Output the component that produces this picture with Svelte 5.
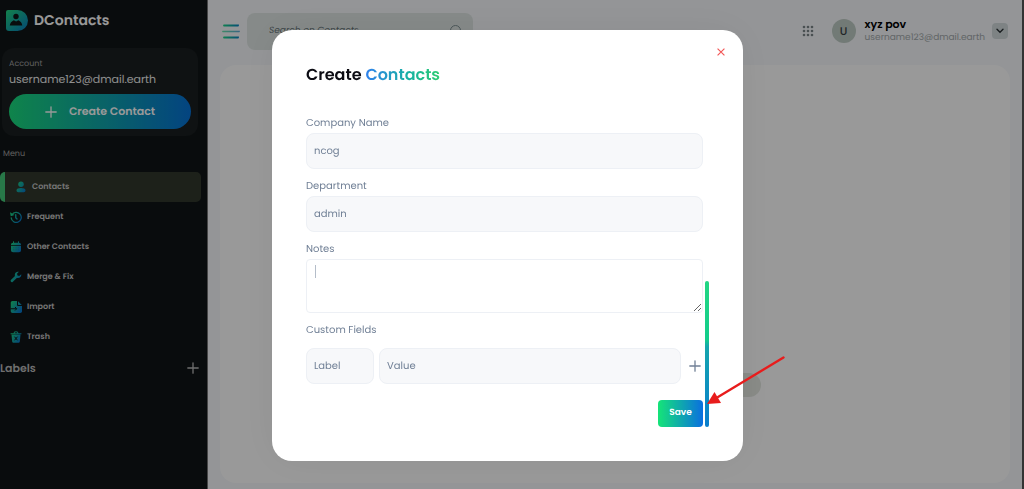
<script>
  let company = $state('ncog');
  let department = $state('admin');
  let notes = $state('');
  let customLabel = $state('');
  let customValue = $state('');
  let search = $state('');
  let active = $state('Contacts');

  const menu = ['Contacts', 'Frequent', 'Other Contacts', 'Merge & Fix', 'Import', 'Trash'];
</script>

{#snippet plus()}
  <svg class="plus" viewBox="0 0 12 12" aria-hidden="true">
    <path d="M6 .8v10.4M.8 6h10.4" stroke="currentColor" stroke-width="1.3" stroke-linecap="round" />
  </svg>
{/snippet}

{#snippet icon(name)}
  <svg class="icon" viewBox="0 0 24 24" fill="none" aria-hidden="true">
    {#if name === 'Contacts'}
      <circle cx="12" cy="6.500" r="5.500" fill="url(#brand)" />
      <path d="M3 18.500c0-3 3.900-4.500 9-4.500s9 1.500 9 4.500c0 2.500-1.500 4-3.500 4h-11C4.500 22.500 3 21 3 18.500z" fill="url(#brand)" />
    {:else if name === 'Frequent'}
      <path d="M4 7.500A10 10 0 1 1 2.500 14" stroke="url(#brand)" stroke-width="2.600" stroke-linecap="round" />
      <path d="M0 2.500l1.500 8 7.500-2.500z" fill="url(#brand)" />
      <path d="M11.500 7.500v6l2.500 2.500" stroke="url(#brand)" stroke-width="2.800" stroke-linecap="round" />
    {:else if name === 'Other Contacts'}
      <path d="M7 1.500v4M17 1.500v4" stroke="url(#brand)" stroke-width="2" stroke-linecap="round" />
      <path d="M2 8c0-3 1.500-4.500 4.500-4.500h11C20.500 3.500 22 5 22 8z" fill="url(#brand)" />
      <path d="M2 9.500h20V18c0 3-1.500 4.500-4.500 4.500h-11C3.500 22.500 2 21 2 18z" fill="url(#brand)" />
      <path d="M7.500 13.500h.1M12 13.500h.1M16.500 13.500h.1M7.500 17.500h.1M12 17.500h.1M16.500 17.500h.1" stroke="#108089" stroke-width="1.800" stroke-linecap="round" />
    {:else if name === 'Merge & Fix'}
      <path d="M22.500 6.500l-4 3.500-3.500-1-1-3.500 3.800-3.800C14 .6 9.800 3 9.600 7.500c0 1 .1 1.800.4 2.600L1.700 18c-1.700 1.700.9 5.800 3.600 4l8.300-8.200c4.700 1.500 9.900-2.300 8.900-7.300z" fill="url(#brand)" />
    {:else if name === 'Import'}
      <path d="M5 0h9v7.500C14 9 15 10 16.500 10H24v10.500c0 2-1.500 3.500-3.500 3.500H5c-2 0-3.500-1.500-3.500-3.500v-17C1.500 1.500 3 0 5 0z" fill="url(#brand)" />
      <path d="M16 .5L23.500 8H17c-.6 0-1-.4-1-1z" fill="url(#brand)" />
      <path d="M1 15.500h12M10 12l3.500 3.500L10 19" stroke="#101516" stroke-width="2" />
    {:else}
      <path d="M2 5.500h20M8 5c0-2.500 1.500-3.500 4-3.500S16 2.500 16 5" stroke="url(#brand)" stroke-width="2.200" stroke-linecap="round" />
      <path d="M3 7h18l-1.300 13.500c-.2 2-1.400 3-3.400 3H7.700c-2 0-3.200-1-3.400-3z" fill="url(#brand)" />
      <path d="M9.500 12l5 6M14.500 12l-5 6" stroke="#101516" stroke-width="2" stroke-linecap="round" />
    {/if}
  </svg>
{/snippet}

<svg class="defs" width="0" height="0" aria-hidden="true">
  <defs>
    <linearGradient id="brand" gradientUnits="userSpaceOnUse" x1="2" y1="6" x2="22" y2="18">
      <stop offset="0" stop-color="#1ad084" />
      <stop offset="1" stop-color="#0878cc" />
    </linearGradient>
  </defs>
</svg>

<div class="app">
  <aside class="sidebar">
    <div class="brand">
      <svg class="logo" viewBox="0 0 22 21" aria-hidden="true">
        <defs>
          <linearGradient id="logo" x1="0" y1="0" x2="1" y2="1">
            <stop offset="0" stop-color="#20d77d" />
            <stop offset="1" stop-color="#087ac4" />
          </linearGradient>
        </defs>
        <path d="M2 0h9.500a10.500 10.500 0 0 1 0 21H3a3 3 0 0 1-3-3V2a2 2 0 0 1 2-2z" fill="url(#logo)" />
        <circle cx="10" cy="6.500" r="2.700" fill="#101516" />
        <path d="M3.800 15.500c.3-2.500 1.800-4 4-5.200l2.300 1.300 2.300-1.300c2.200 1.200 3.600 2.700 3.900 5.200z" fill="#101516" />
      </svg>
      <span>DContacts</span>
    </div>

    <div class="account">
      <span class="caption">Account</span>
      <span class="address">username123@dmail.earth</span>
      <button class="create" type="button">{@render plus()} Create Contact</button>
    </div>

    <span class="caption menu-title">Menu</span>
    <nav>
      {#each menu as item}
        <button class="nav-item" class:active={active === item} type="button" onclick={() => (active = item)}>
          {@render icon(item)}
          {item}
        </button>
      {/each}
    </nav>

    <div class="labels">
      <span>Labels</span>
      <button type="button" aria-label="Add label">{@render plus()}</button>
    </div>
  </aside>

  <main class="main">
    <header class="topbar">
      <button class="hamburger" type="button" aria-label="Toggle menu">
        <svg viewBox="0 0 18 15" aria-hidden="true">
          <defs>
            <linearGradient id="bars" gradientUnits="userSpaceOnUse" x1="0" y1="0" x2="18" y2="0">
              <stop offset="0" stop-color="#1fdc82" />
              <stop offset="1" stop-color="#087cc9" />
            </linearGradient>
          </defs>
          <path d="M2 1.500h14v.01M2 13.500h14v.01" stroke="url(#bars)" stroke-width="1.800" stroke-linecap="round" />
          <path d="M.8 7.500h16.400v.01" stroke="url(#bars)" stroke-width="1.300" stroke-linecap="round" opacity=".65" />
        </svg>
      </button>
      <label class="search">
        <input type="text" placeholder="Search on Contacts" aria-label="Search on Contacts" bind:value={search} />
        <svg viewBox="0 0 14 14" fill="none" stroke="#7f9295" aria-hidden="true">
          <circle cx="6.500" cy="6.500" r="5" />
          <path d="M10.200 10.200L13 13" stroke-linecap="round" />
        </svg>
      </label>

      <div class="user">
        <button class="apps" type="button" aria-label="Apps">
          <svg viewBox="0 0 12 12" fill="#7c8589" aria-hidden="true">
            {#each [2, 6, 10] as cy}
              {#each [2, 6, 10] as cx}
                <circle {cx} {cy} r="1.300" />
              {/each}
            {/each}
          </svg>
        </button>
        <span class="avatar">U</span>
        <div class="who">
          <strong>xyz pov</strong>
          <span>username123@dmail.earth</span>
        </div>
        <button class="chevron" type="button" aria-label="Account menu">
          <svg viewBox="0 0 8 6" fill="none" aria-hidden="true">
            <path d="M1 1.200l3 3 3-3" stroke="#2c3236" stroke-width="1.400" stroke-linecap="round" />
          </svg>
        </button>
      </div>
    </header>

    <section class="panel">
      <div class="panel-pill"></div>
    </section>
  </main>
</div>

<div class="overlay">
  <div class="modal" role="dialog" aria-modal="true" aria-labelledby="modal-title">
    <button class="close" type="button" aria-label="Close">
      <svg viewBox="0 0 7 7" aria-hidden="true">
        <path d="M.5.5l6 6M6.500.5l-6 6" stroke="#f25555" />
      </svg>
    </button>
    <h2 id="modal-title">Create <span>Contacts</span></h2>

    <div class="scroll-area">
      <form onsubmit={(e) => e.preventDefault()}>
        <div class="field">
          <label for="company">Company Name</label>
          <input id="company" type="text" bind:value={company} />
        </div>
        <div class="field">
          <label for="department">Department</label>
          <input id="department" type="text" bind:value={department} />
        </div>
        <div class="field">
          <label for="notes">Notes</label>
          <textarea id="notes" bind:value={notes}></textarea>
        </div>
        <fieldset>
          <legend>Custom Fields</legend>
          <div class="custom-row">
            <input class="custom-label" type="text" placeholder="Label" aria-label="Label" bind:value={customLabel} />
            <input class="custom-value" type="text" placeholder="Value" aria-label="Value" bind:value={customValue} />
            <button type="button" aria-label="Add field">{@render plus()}</button>
          </div>
        </fieldset>
        <button class="save" type="submit">Save</button>
      </form>
      <div class="scrollbar"></div>
    </div>

    <svg class="arrow" viewBox="0 0 78 49" aria-hidden="true">
      <path d="M76.500 1.500L11 41" stroke="#e81c1c" stroke-width="2.400" stroke-linecap="round" />
      <path d="M0 48L7.500 36l6.500 11z" fill="#e81c1c" />
    </svg>
  </div>
</div>

<style>
  :global(body) {
    margin: 0;
    background: #f7f9fc;
  }

  :global(#app) {
    font-family: Poppins, Inter, sans-serif;
    font-size: 11px;
    text-rendering: geometricPrecision;
  }

  button,
  input,
  textarea {
    font: inherit;
    color: inherit;
    text-rendering: inherit;
    box-sizing: border-box;
  }

  button {
    padding: 0;
    border: none;
    background: none;
    cursor: pointer;
  }

  svg {
    display: block;
    flex: none;
  }

  .defs {
    position: absolute;
  }

  .plus {
    width: 12px;
    height: 12px;
  }

  .app {
    display: flex;
    min-height: 100vh;
    box-sizing: border-box;
    border-right: 2px solid #555;
  }

  .sidebar {
    width: 208px;
    flex: none;
    background: #101516;
    color: #fff;
    border-right: 1px solid #777;
    box-sizing: border-box;
  }

  .brand {
    display: flex;
    align-items: center;
    gap: 6px;
    height: 40px;
    padding-left: 6px;
    font-size: 14px;
    font-weight: 600;
  }

  .logo {
    width: 22px;
    height: 21px;
  }

  .account {
    display: flex;
    flex-direction: column;
    margin: 8px 9px 0 2px;
    padding: 10px 7px 7px;
    border-radius: 12px;
    background: #191e20;
  }

  .caption {
    font-size: 8px;
    line-height: 12px;
    color: #a0a0a0;
  }

  .address {
    line-height: 18px;
    font-size: 11px;
    color: #eee;
  }

  .create {
    display: flex;
    align-items: center;
    justify-content: center;
    gap: 12px;
    height: 35px;
    margin-top: 6px;
    border-radius: 18px;
    background: linear-gradient(90deg, #19dc7d, #0672d6);
    font-size: 11px;
    font-weight: 600;
  }

  .menu-title {
    display: block;
    padding: 12px 0 12px 3px;
  }

  nav {
    display: flex;
    flex-direction: column;
  }

  .nav-item {
    display: flex;
    align-items: center;
    gap: 5px;
    height: 30px;
    margin-right: 6px;
    padding-left: 10px;
    font-size: 8px;
    font-weight: 600;
    color: #c4c4c4;
  }

  .nav-item.active {
    border-left: 5px solid #43c878;
    border-radius: 5px;
    background: #31382c;
  }

  .icon {
    width: 12px;
    height: 12px;
  }

  .labels {
    display: flex;
    align-items: center;
    justify-content: space-between;
    height: 32px;
    padding-right: 8px;
    font-size: 11px;
    font-weight: 600;
    color: #b8b8b8;
  }

  .main {
    flex: 1;
    min-width: 0;
    display: flex;
    flex-direction: column;
    background: #f7f9fc;
  }

  .topbar {
    display: flex;
    align-items: center;
    height: 38px;
    padding: 12px 14px 15px;
  }

  .hamburger svg {
    width: 18px;
    height: 15px;
  }

  .search {
    display: flex;
    align-items: center;
    width: 226px;
    height: 37px;
    margin-left: 7px;
    padding: 0 10px 0 22px;
    box-sizing: border-box;
    border-radius: 8px;
    background: #dfe6e4;
  }

  .search input {
    flex: 1;
    min-width: 0;
    padding: 0;
    border: none;
    background: none;
    font-size: 9px;
    font-style: italic;
  }

  .search input::placeholder {
    color: #667477;
  }

  .search svg {
    width: 14px;
    height: 14px;
  }

  .user {
    display: flex;
    align-items: center;
    margin-left: auto;
  }

  .apps {
    margin-right: 18px;
  }

  .apps svg {
    width: 12px;
    height: 12px;
  }

  .avatar {
    width: 24px;
    height: 24px;
    margin-right: 9px;
    border-radius: 50%;
    background: #bfccc5;
    color: #383f43;
    font-weight: 500;
    line-height: 24px;
    text-align: center;
  }

  .who {
    display: flex;
    flex-direction: column;
    margin-right: 7px;
  }

  .who strong {
    line-height: 12px;
    font-weight: 600;
    color: #000;
  }

  .who span {
    padding-top: 2px;
    font-size: 9px;
    line-height: 12px;
    color: #a2a8ab;
  }

  .chevron {
    display: grid;
    place-items: center;
    width: 16px;
    height: 16px;
    border-radius: 4px;
    background: #d2dbdd;
  }

  .chevron svg {
    width: 8px;
    height: 6px;
  }

  .panel {
    flex: 1;
    display: flex;
    align-items: flex-end;
    justify-content: center;
    margin: 0 12px 6px;
    padding-bottom: 86px;
    border-radius: 16px;
    background: #fff;
  }

  .panel-pill {
    width: 292px;
    height: 24px;
    border-radius: 12px;
    background: #e4e8e1;
  }

  .overlay {
    position: fixed;
    inset: 0;
    display: flex;
    align-items: center;
    justify-content: center;
    padding: 2px 9px 0 0;
    background: rgba(0, 0, 0, 0.4);
  }

  .modal {
    position: relative;
    width: 471px;
    max-width: 90%;
    padding: 33px 34px 34px;
    box-sizing: border-box;
    border-radius: 20px;
    background: #fff;
    box-shadow: 0 0 40px rgba(0, 10, 30, 0.06);
    color: #718096;
  }

  .close {
    position: absolute;
    top: 18px;
    right: 18px;
  }

  .close svg {
    width: 8px;
    height: 8px;
  }

  h2 {
    margin: 0 0 28px;
    font-size: 16px;
    line-height: 24px;
    font-weight: 600;
    color: #0b0b12;
  }

  h2 span {
    background: linear-gradient(90deg, #2f80ed, #16b3a0 60%, #2ecc71);
    background-clip: text;
    color: transparent;
  }

  .scroll-area {
    display: flex;
    align-items: flex-end;
    gap: 2px;
  }

  form {
    flex: 1;
    min-width: 0;
    display: flex;
    flex-direction: column;
    gap: 9px;
  }

  .field {
    display: flex;
    flex-direction: column;
    gap: 2px;
  }

  label,
  legend {
    padding: 0;
    font-size: 10px;
    line-height: 16px;
  }

  form input {
    width: 100%;
    height: 36px;
    padding: 0 7px;
    border: 1px solid #edf0f5;
    border-radius: 8px;
    outline: none;
    background: #f7f8fa;
    font-size: 10px;
  }

  form input::placeholder {
    color: #718096;
    opacity: 1;
  }

  /* the thin bar is the text cursor of the empty notes box */
  textarea {
    height: 54px;
    padding: 6px 7px;
    border: 1px solid #edf0f5;
    border-radius: 4px;
    outline: none;
    background: linear-gradient(#b4bdc9, #b4bdc9) 8px 5px / 1px 13px no-repeat #fff;
    resize: vertical;
  }

  fieldset {
    min-width: 0;
    margin: 0;
    padding: 0;
    border: none;
  }

  .custom-row {
    display: flex;
    align-items: center;
    gap: 5px;
    padding-top: 10px;
  }

  .custom-row .custom-label {
    width: 68px;
    flex: none;
  }

  .custom-row .custom-value {
    flex: 1;
    min-width: 0;
  }

  .custom-row button {
    padding: 0 2px 0 3px;
  }

  .save {
    align-self: flex-end;
    width: 45px;
    height: 27px;
    margin-top: 7px;
    border-radius: 4px;
    background: linear-gradient(90deg, #15e478, #0a6fe0);
    color: #fff;
    font-size: 9px;
    font-weight: 600;
  }

  .scrollbar {
    width: 4px;
    height: 146px;
    border-radius: 2px;
    background: linear-gradient(#22d683, #12cd8b 40%, #15a5ad 45%, #0d8fc0 75%, #0a7dcc);
  }

  .arrow {
    position: absolute;
    right: -42px;
    bottom: 56px;
    width: 78px;
    height: 49px;
  }
</style>
